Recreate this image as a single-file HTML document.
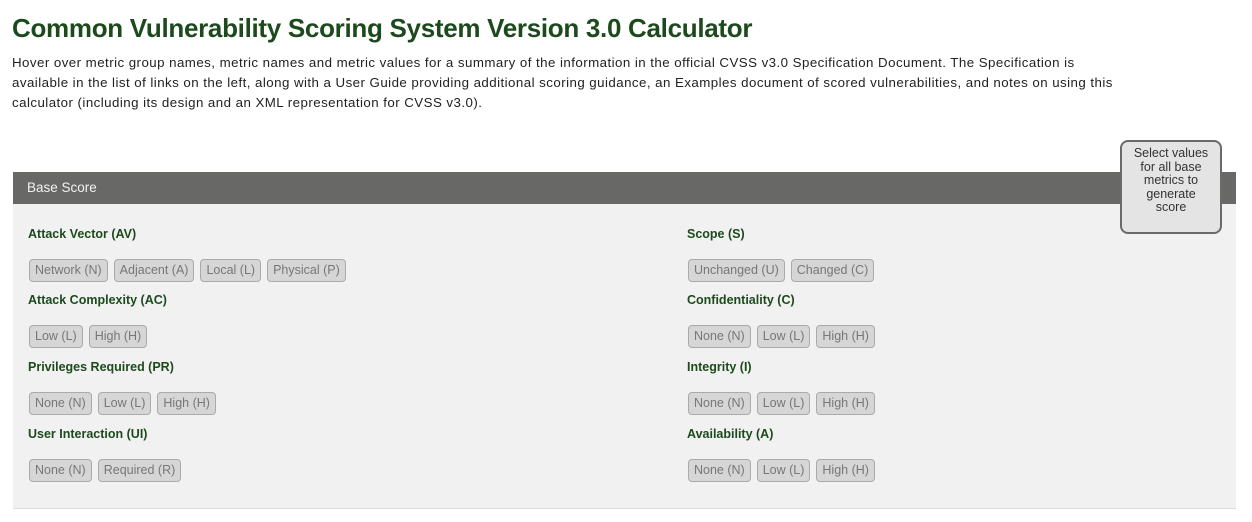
<!DOCTYPE html>
<html><head><style>
body{margin:0;background:#fff;font-family:"Liberation Sans",sans-serif;width:1252px;height:522px;overflow:hidden;position:relative}
h1{position:absolute;left:12px;top:13px;margin:0;font-size:26px;color:#1d4a1d;font-weight:bold;letter-spacing:-0.3px}
p.d{position:absolute;left:12px;top:53px;margin:0;font-size:13.3px;letter-spacing:0.45px;line-height:20px;color:#222;width:1110px}
.bar{position:absolute;left:13px;top:172px;width:1223px;height:32px;background:#686866;color:#f2f2f2;font-size:13.5px;line-height:32px;padding-left:14px;box-sizing:border-box}
.panel{position:absolute;left:13px;top:204px;width:1223px;height:304px;background:#f1f1f1;border-bottom:1px solid #ddd}
.lbl{position:absolute;font-weight:bold;font-size:12.5px;color:#1d4a1d}
.row{position:absolute;white-space:nowrap}
.b{display:inline-block;height:21px;line-height:21px;padding:0 5px;margin-right:6px;border:1px solid #aaa;border-radius:4px;background:#d6d6d6;color:#777;font-size:12.5px}
.tip{position:absolute;left:1120px;top:140px;width:102px;height:94px;border:2px solid #6a6a6a;border-radius:8px;background:#e4e4e4;box-sizing:border-box;text-align:center;font-size:12.5px;line-height:13.5px;color:#333;padding:5px 9px 0}
</style></head><body>
<h1>Common Vulnerability Scoring System Version 3.0 Calculator</h1>
<p class="d">Hover over metric group names, metric names and metric values for a summary of the information in the official CVSS v3.0 Specification Document. The Specification is available in the list of links on the left, along with a User Guide providing additional scoring guidance, an Examples document of scored vulnerabilities, and notes on using this calculator (including its design and an XML representation for CVSS v3.0).</p>
<div class="bar">Base Score</div>
<div class="panel"></div>
<div class="tip">Select values for all base metrics to generate score</div>

<div class="lbl" style="left:28px;top:227px">Attack Vector (AV)</div>
<div class="row" style="left:29px;top:259px"><span class="b">Network (N)</span><span class="b">Adjacent (A)</span><span class="b">Local (L)</span><span class="b">Physical (P)</span></div>
<div class="lbl" style="left:28px;top:293px">Attack Complexity (AC)</div>
<div class="row" style="left:29px;top:325px"><span class="b">Low (L)</span><span class="b">High (H)</span></div>
<div class="lbl" style="left:28px;top:360px">Privileges Required (PR)</div>
<div class="row" style="left:29px;top:392px"><span class="b">None (N)</span><span class="b">Low (L)</span><span class="b">High (H)</span></div>
<div class="lbl" style="left:28px;top:427px">User Interaction (UI)</div>
<div class="row" style="left:29px;top:459px"><span class="b">None (N)</span><span class="b">Required (R)</span></div>

<div class="lbl" style="left:687px;top:227px">Scope (S)</div>
<div class="row" style="left:688px;top:259px"><span class="b">Unchanged (U)</span><span class="b">Changed (C)</span></div>
<div class="lbl" style="left:687px;top:293px">Confidentiality (C)</div>
<div class="row" style="left:688px;top:325px"><span class="b">None (N)</span><span class="b">Low (L)</span><span class="b">High (H)</span></div>
<div class="lbl" style="left:687px;top:360px">Integrity (I)</div>
<div class="row" style="left:688px;top:392px"><span class="b">None (N)</span><span class="b">Low (L)</span><span class="b">High (H)</span></div>
<div class="lbl" style="left:687px;top:427px">Availability (A)</div>
<div class="row" style="left:688px;top:459px"><span class="b">None (N)</span><span class="b">Low (L)</span><span class="b">High (H)</span></div>
</body></html>
